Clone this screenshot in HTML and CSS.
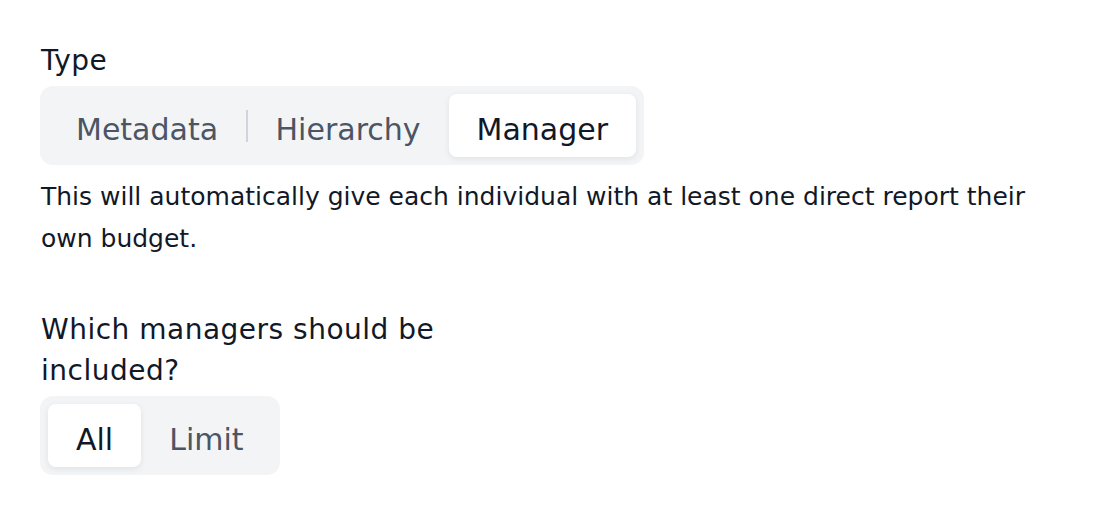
FILE: index.html
```html
<!DOCTYPE html>
<html>
<head>
<meta charset="utf-8">
<link rel="stylesheet" href="styles.css">
</head>
<body>
<div class="form">
  <div class="field">
    <div class="label">Type</div>
    <div class="segmented">
      <div class="seg">Metadata</div>
      <div class="sep"></div>
      <div class="seg">Hierarchy</div>
      <div class="seg active">Manager</div>
    </div>
    <p class="help">This will automatically give each individual with at least one direct report their own budget.</p>
  </div>
  <div class="field second">
    <div class="label narrow">Which managers should be included?</div>
    <div class="segmented">
      <div class="seg active">All</div>
      <div class="seg">Limit</div>
    </div>
  </div>
</div>
</body>
</html>
```
FILE: styles.css
```css
* { box-sizing: border-box; }
html, body { margin: 0; padding: 0; background: #ffffff; }
body {
  font-family: "DejaVu Sans", sans-serif;
  color: #111827;
}
.form {
  padding: 40px 40px 0 40px;
  width: 1098px;
}
.field { display: flex; flex-direction: column; align-items: flex-start; }
.label {
  font-size: 28px;
  letter-spacing: 0.5px;
  line-height: 41px;
  color: #111827;
  margin-bottom: 5px;
  padding-left: 1px;
}
.label.narrow { width: 430px; }
.segmented {
  display: inline-flex;
  align-items: center;
  background: #f3f4f6;
  border-radius: 13px;
  padding: 8px;
}
.seg {
  height: 63px;
  display: flex;
  align-items: center;
  padding: 7px 28px 0;
  font-size: 30px;
  color: #4b5563;
  border-radius: 8px;
}
.seg.active {
  background: #ffffff;
  color: #111827;
  box-shadow: 0 2px 6px rgba(17, 24, 39, 0.08);
}
.sep {
  width: 1.5px;
  height: 32px;
  background: #d1d5db;
}
.help {
  margin: 11px 0 0;
  padding-left: 1px;
  font-size: 25px;
  line-height: 42px;
  width: 1010px;
}
.second { margin-top: 49px; }
```
